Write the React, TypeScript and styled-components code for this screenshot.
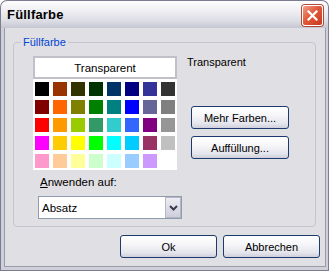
import React from 'react';
import styled, { createGlobalStyle } from 'styled-components';

const GlobalStyle = createGlobalStyle`
  body {
    margin: 0;
    font-family: "Liberation Sans", Arial, sans-serif;
    font-size: 11px;
    background: #fff;
  }
`;

const Window = styled.div`
  width: 329px;
  height: 271px;
  display: flex;
  flex-direction: column;
  box-sizing: border-box;
`;

const TitleBar = styled.div`
  height: 30px;
  box-sizing: border-box;
  display: flex;
  align-items: center;
  justify-content: space-between;
  padding: 0 5px 0 6px;
  border: 1px solid #7c7c90;
  border-bottom: none;
  border-radius: 7px 7px 0 0;
  background: linear-gradient(#fdfdfe 0%, #f0f0f4 35%, #dcdce4 75%, #c6c6d2 100%);
`;

const Title = styled.span`
  font-size: 13px;
  font-weight: bold;
  color: #000;
  letter-spacing: 0.2px;
`;

const CloseButton = styled.div`
  width: 19px;
  height: 19px;
  margin-top: 1px;
  border: 1px solid #fff;
  border-radius: 3px;
  background: linear-gradient(135deg, #f0a08a 0%, #e05a3c 45%, #c8391c 100%);
  display: flex;
  align-items: center;
  justify-content: center;
  box-shadow: 0 0 0 1px #b04a36;
`;

const Body = styled.div`
  flex: 1;
  display: flex;
  flex-direction: column;
  background: #e0dfe3;
  border: 1px solid #7c7c90;
  border-top: none;
  box-shadow: inset 3px 0 0 #cfcfd9, inset -2px 0 0 #cfcfd9, inset 0 -3px 0 #cfcfd9,
    inset 4px 0 0 #9a9aab, inset -3px 0 0 #9a9aab, inset 0 -4px 0 #9a9aab;
  padding: 8px 8px 12px 12px;
`;

const Group = styled.fieldset`
  width: 303px;
  box-sizing: border-box;
  margin: 0;
  padding: 0 0 7px 0;
  border: 1px solid #c5c5cd;
  border-radius: 4px;
`;

const Legend = styled.legend`
  color: #0046d5;
  padding: 0 2px;
  margin-left: 7px;
  line-height: 13px;
`;

const GroupInner = styled.div`
  display: flex;
  padding: 7px 0 0 19px;
`;

const LeftCol = styled.div`
  width: 144px;
  display: flex;
  flex-direction: column;
`;

const TransparentBox = styled.div`
  height: 23px;
  box-sizing: border-box;
  background: #fff;
  border: 2px solid #c0c0c8;
  display: flex;
  align-items: center;
  justify-content: center;
  font-size: 11.5px;
  color: #000;
`;

const Palette = styled.div`
  background: #fff;
  padding: 3px 2px 2px 2px;
  display: grid;
  grid-template-columns: repeat(8, 14px);
  grid-auto-rows: 14px;
  gap: 4px;
`;

const Swatch = styled.div<{ $c: string }>`
  background: ${(p) => p.$c};
`;

const FieldLabel = styled.div`
  margin: 6px 0 0 7px;
  line-height: 13px;
  font-size: 11.5px;
`;

const Combo = styled.div`
  margin: 7px 0 0 5px;
  width: 144px;
  height: 23px;
  box-sizing: border-box;
  border: 1px solid #8e9cb0;
  background: #fff;
  display: flex;
  align-items: center;
  justify-content: space-between;
  padding-left: 3px;
  font-size: 11.5px;
`;

const DropButton = styled.div`
  width: 16px;
  height: 21px;
  box-sizing: border-box;
  border: 1px solid #b6b6c4;
  background: linear-gradient(#ececf2, #cfcfdc);
  display: flex;
  align-items: center;
  justify-content: center;
`;

const RightCol = styled.div`
  margin-left: 10px;
  display: flex;
  flex-direction: column;
`;

const InfoText = styled.div`
  margin-top: 0;
  line-height: 13px;
  font-size: 11px;
`;

const Button = styled.button<{ $w?: number }>`
  width: ${(p) => p.$w ?? 98}px;
  height: 23px;
  box-sizing: border-box;
  border: 1px solid #1c3a6b;
  border-radius: 3px;
  background: linear-gradient(#ffffff 0%, #f6f6f9 40%, #e4e4ec 80%, #cfcfdc 100%);
  font-family: "Liberation Sans", Arial, sans-serif;
  font-size: 11px;
  color: #000;
  padding: 0;
`;

const SideButtons = styled.div`
  margin: 37px 0 0 4px;
  display: flex;
  flex-direction: column;
  gap: 7px;
`;

const Footer = styled.div`
  margin-top: 8px;
  display: flex;
  justify-content: flex-end;
  gap: 6px;
`;

const colors = [
  '#000000', '#993300', '#333300', '#003300', '#003366', '#000080', '#333399', '#333333',
  '#800000', '#ff6600', '#808000', '#008000', '#008080', '#0000ff', '#666699', '#808080',
  '#ff0000', '#ff9900', '#99cc00', '#339966', '#33cccc', '#3366ff', '#800080', '#969696',
  '#ff00ff', '#ffcc00', '#ffff00', '#00ff00', '#00ffff', '#00ccff', '#993366', '#c0c0c0',
  '#ff99cc', '#ffcc99', '#ffff99', '#ccffcc', '#ccffff', '#99ccff', '#cc99ff', '#ffffff',
];

export default function App() {
  return (
    <>
      <GlobalStyle />
      <Window>
        <TitleBar>
          <Title>Füllfarbe</Title>
          <CloseButton>
            <svg width="11" height="11" viewBox="0 0 11 11">
              <path d="M1.5 1.5 L9.5 9.5 M9.5 1.5 L1.5 9.5" stroke="#fff" strokeWidth="2.2" strokeLinecap="square" />
            </svg>
          </CloseButton>
        </TitleBar>
        <Body>
          <Group>
            <Legend>Füllfarbe</Legend>
            <GroupInner>
              <LeftCol>
                <TransparentBox>Transparent</TransparentBox>
                <Palette>
                  {colors.map((c, i) => (
                    <Swatch key={i} $c={c} />
                  ))}
                </Palette>
                <FieldLabel>
                  <u>A</u>nwenden auf:
                </FieldLabel>
                <Combo>
                  <span>Absatz</span>
                  <DropButton>
                    <svg width="9" height="6" viewBox="0 0 9 6">
                      <path d="M1 1 L4.5 4.5 L8 1" fill="none" stroke="#3a3a4a" strokeWidth="2" />
                    </svg>
                  </DropButton>
                </Combo>
              </LeftCol>
              <RightCol>
                <InfoText>Transparent</InfoText>
                <SideButtons>
                  <Button>Mehr Farben...</Button>
                  <Button>Auffüllung...</Button>
                </SideButtons>
              </RightCol>
            </GroupInner>
          </Group>
          <Footer>
            <Button $w={97}>Ok</Button>
            <Button $w={97}>Abbrechen</Button>
          </Footer>
        </Body>
      </Window>
    </>
  );
}
